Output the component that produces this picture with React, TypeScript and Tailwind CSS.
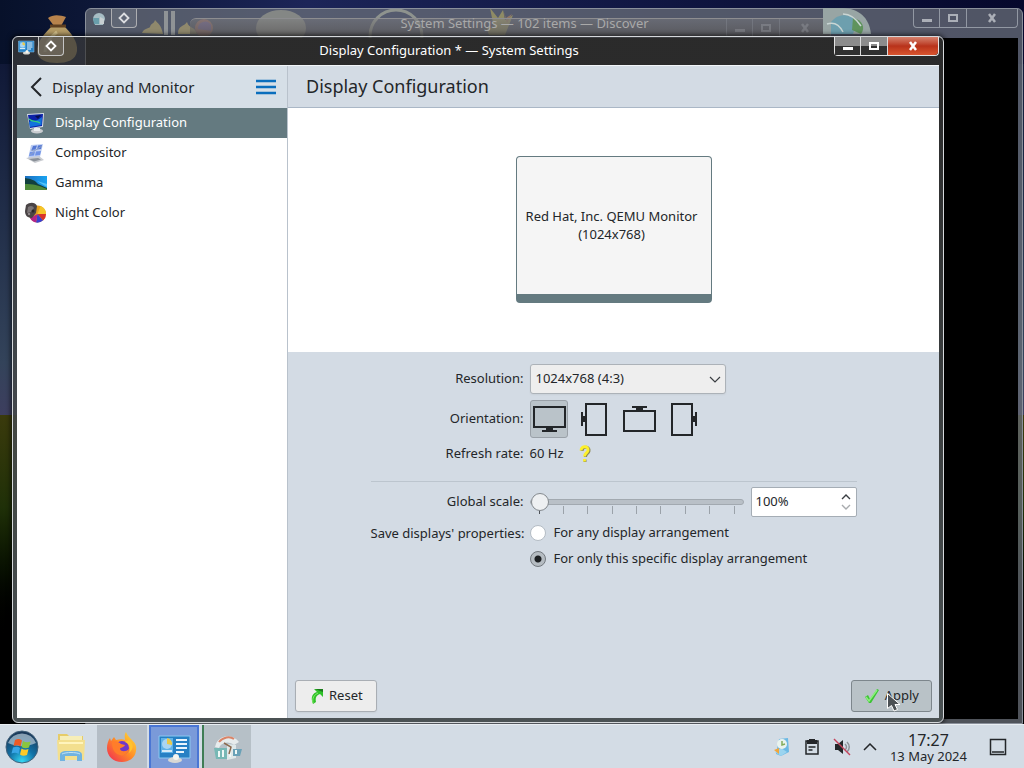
import { useState } from "react";
import type { ReactNode } from "react";

const modules = [
  { name: "Display Configuration", icon: <DisplayIcon /> },
  { name: "Compositor", icon: <CompositorIcon /> },
  { name: "Gamma", icon: <GammaIcon /> },
  { name: "Night Color", icon: <NightColorIcon /> },
];

const orientations = [
  { id: "normal", label: "No rotation", icon: <NormalMonitor /> },
  { id: "left", label: "90° clockwise", icon: <LeftMonitor /> },
  { id: "flipped", label: "Upside down", icon: <FlippedMonitor /> },
  { id: "right", label: "90° counterclockwise", icon: <RightMonitor /> },
];

function DisplayIcon() {
  return (
    <svg viewBox="0 0 22 22" className="size-[22px] shrink-0">
      <path d="M2 2l17-1-1 14-13 2z" fill="#d7dde6" />
      <path d="M3 3l15-1-1 12-12 2z" fill="#0b22a8" />
      <path d="M4 10c4-3 6 1 13-5l-.5 8L5 15z" fill="#1272dc" />
      <path d="M4 7c4 4 7 1 11 4" stroke="#35d07e" strokeWidth="1.300" fill="none" />
      <path d="M10 4l6-1-3 4z" fill="#061050" />
      <ellipse cx="12" cy="19" rx="6" ry="2.400" fill="#c9ccd0" />
      <path d="M9 16h6v3H9z" fill="#e9ebee" />
    </svg>
  );
}

function CompositorIcon() {
  return (
    <svg viewBox="0 0 22 22" className="size-[22px] shrink-0">
      <path d="M6 3l12-1-3 13-12 2z" fill="#bccdf2" />
      <path d="M8 4l4-.5-1.500 4-4 .5zM13 3.500l4-.5-1 4-4 .5z" fill="#5478d4" />
      <path d="M5 10l5-.5-1 4-5 .5zM11 9.500l5-.5-1 4-5 .5z" fill="#6f92e6" />
      <path d="M1 16l13-2 5 4-9 3z" fill="#c9ccd1" />
      <path d="M4 17l9-1 3 1.500-7 2z" fill="#8a9098" />
      <path d="M6 8l3 1 8-5M5 13l4-3" stroke="#8d9fc6" fill="none" />
    </svg>
  );
}

function GammaIcon() {
  return (
    <svg viewBox="0 0 22 22" className="size-[22px] shrink-0">
      <defs>
        <linearGradient id="gammaSky" x1="0" x2="1">
          <stop offset="0" stopColor="#1c6fc0" />
          <stop offset="1" stopColor="#19a4f2" />
        </linearGradient>
      </defs>
      <path d="M0 4h22v14H0z" fill="url(#gammaSky)" />
      <path d="M0 6c6 1 10 2 13 6l9 4v2H0z" fill="#12403e" />
      <path d="M0 12c8 0 13 1 22 5v1H0z" fill="#4f8a3a" />
      <path d="M12 9l10 3v3z" fill="#55c4f7" />
    </svg>
  );
}

function NightColorIcon() {
  return (
    <svg viewBox="0 0 22 22" className="size-[22px] shrink-0">
      <circle cx="12.500" cy="12" r="8.500" fill="#e9a11c" />
      <path d="M12.500 12l3-8a8.500 8.500 0 0 1 5.500 8z" fill="#f5c52a" />
      <path d="M12.500 12H21a8.500 8.500 0 0 1-3 6.500z" fill="#d9342b" />
      <path d="M12.500 12l5.500 6.500a8.500 8.500 0 0 1-7 2z" fill="#3a3fd0" />
      <path d="M12.500 12L11 20.500A8.500 8.500 0 0 1 5 16z" fill="#b32488" />
      <path d="M1 3c4-3 9-3 11 1l-1 7-4 5c-4 0-7-2-7-7z" fill="#4a4446" />
      <path d="M3 5c3-2 5-1 6 1l-3 4-4 1z" fill="#7b7577" />
      <circle cx="8" cy="9" r="1.500" fill="#2a2628" />
      <circle cx="4" cy="12" r="1.200" fill="#918a8c" />
    </svg>
  );
}

function NormalMonitor() {
  return (
    <svg viewBox="0 0 36 36" className="size-9" fill="none" stroke="#232629" strokeWidth="2">
      <path d="M3 6h31v20H3zM11 30h15" />
      <path d="M15 28.500h7" strokeWidth="4" />
    </svg>
  );
}

function LeftMonitor() {
  return (
    <svg viewBox="0 0 36 36" className="size-9" fill="none" stroke="#232629" strokeWidth="2">
      <path d="M10 3h20v31H10zM6 11v14" />
      <path d="M8 15v6" strokeWidth="4" />
    </svg>
  );
}

function FlippedMonitor() {
  return (
    <svg viewBox="0 0 36 36" className="size-9" fill="none" stroke="#232629" strokeWidth="2">
      <path d="M3 10h31v20H3zM11 6h15" />
      <path d="M15 7.500h7" strokeWidth="4" />
    </svg>
  );
}

function RightMonitor() {
  return (
    <svg viewBox="0 0 36 36" className="size-9" fill="none" stroke="#232629" strokeWidth="2">
      <path d="M6 3h20v31H6zM30 11v14" />
      <path d="M28 15v6" strokeWidth="4" />
    </svg>
  );
}

function WallpaperIcons() {
  return (
    <svg className="absolute left-0 top-0 h-16 w-[1024px]" viewBox="0 0 1024 64" aria-hidden="true">
      {/* money bag */}
      <path d="M48 18c5-4 12-3 18-1l-5 9h-7z" fill="#b8834c" />
      <path d="M53 25h10c8 8 15 16 14 26-1 9-10 12-20 12s-19-3-20-11c-1-10 8-19 16-27z" fill="#b59c66" />
      <path d="M50 26h16" stroke="#5e3f20" strokeWidth="3" />
      <path d="M57 32c-8 6-12 12-12 20" stroke="#d9c68f" strokeWidth="3" fill="none" />
      {/* laurel and columns */}
      <path d="M142 33c2-5 6-4 8-6 1-4 4-3 5-7 3 4 6 4 8 14zM178 34c0-9 6-7 9-12 2 7 8 4 10 12z" fill="#ffd34a" />
      <path d="M164 11h4v24h-4zM171 11h4v24h-4z" fill="#ffffee" />
      <circle cx="204" cy="28" r="9" fill="#ff6238" />
      <path d="M198 29a7 7 0 0 1 13-4v6z" fill="#9040d8" />
      <ellipse cx="281" cy="28" rx="25" ry="18" fill="#d2ceaa" />
      <circle cx="396" cy="36" r="26" fill="none" stroke="#fcffd0" strokeWidth="3" />
      <path d="M490 8l8 10 5-8 2 10 8-5-8 20h-16l-3-8 8 1z" fill="#ffe02e" />
      <path d="M503 10l3 8 6-4-5 9z" fill="#ff8b30" />
    </svg>
  );
}

function GlobeIcon() {
  return (
    <svg viewBox="0 0 48 26" className="absolute right-[153px] top-2 h-[26px] w-12" aria-hidden="true">
      <path d="M0 0h20c16 1 26 9 28 26H0z" fill="#98a5a4" />
      <path d="M8 14c8-10 20-8 26 0l-4 12H8z" fill="#6d9fae" />
      <path d="M30 10c9 2 13 9 8 16l-9-4z" fill="#5f935c" />
      <path d="M4 16c6-2 12 0 16 8M20 6c8 0 14 6 18 12" stroke="#c9d6d4" strokeWidth="1.500" fill="none" />
    </svg>
  );
}

function WindowControls({ active }: { active?: boolean }) {
  return (
    <div
      className={
        active
          ? "flex h-[19px] rounded-b border border-t-0 border-[#e4e4e4]"
          : "flex h-[19px] rounded-b border border-t-0 border-[#a3a9b3] opacity-80"
      }
    >
      <button
        aria-label="Minimize"
        className={
          active
            ? "flex w-[26px] items-center justify-center border-r border-[#dcdcdc] bg-linear-to-b from-[#8c8c8c] from-50% to-[#303030] to-50%"
            : "flex w-[26px] items-center justify-center border-r border-[#a3a9b3]"
        }
      >
        <svg viewBox="0 0 12 12" className="size-3">
          <path d="M1 7h10v3H1z" fill={active ? "#fff" : "#c2c6cc"} />
        </svg>
      </button>
      <button
        aria-label="Maximize"
        className={
          active
            ? "flex w-[27px] items-center justify-center border-r border-[#dcdcdc] bg-linear-to-b from-[#8c8c8c] from-50% to-[#303030] to-50%"
            : "flex w-[27px] items-center justify-center border-r border-[#a3a9b3]"
        }
      >
        <svg viewBox="0 0 12 12" className="size-3">
          <path d="M2 3h8v6H2z" fill="none" stroke={active ? "#fff" : "#c2c6cc"} strokeWidth="2" />
        </svg>
      </button>
      <button
        aria-label="Close"
        className={
          active
            ? "flex w-[50px] items-center justify-center rounded-br bg-linear-to-b from-[#d5806c] via-[#b8321a] via-50% to-[#d9552f]"
            : "flex w-[50px] items-center justify-center"
        }
      >
        <svg viewBox="0 0 12 12" className="size-3">
          <path d="M3 2l6 8M9 2l-6 8" stroke={active ? "#fff" : "#c2c6cc"} strokeWidth="2.500" />
        </svg>
      </button>
    </div>
  );
}

function DiamondButton() {
  return (
    <button
      aria-label="On all desktops"
      className="flex h-[19px] w-[26px] items-center justify-center rounded-b border border-t-0 border-[#c4c4c4] bg-white/10"
    >
      <svg viewBox="0 0 12 12" className="size-3">
        <path d="M6 1.500L10.500 6 6 10.500 1.500 6z" fill="none" stroke="#fff" strokeWidth="1.800" />
      </svg>
    </button>
  );
}

function BackgroundWindows() {
  return (
    <>
      <div className="absolute bottom-0 left-[85px] right-px top-2 flex flex-col rounded-t-md border border-[#8a909b] bg-[#6a6f78]/75 pb-1 pr-1">
        <div className="flex h-[29px] shrink-0 items-start justify-between pl-1">
          <div className="flex gap-[3px] opacity-80">
            <svg viewBox="0 0 18 18" className="mt-px size-[18px]">
              <path d="M3 9a6 6 0 0 1 12 0l-2 6H5z" fill="#bcd7dc" />
              <path d="M3 8h6v6H4z" fill="#6fb0bd" />
              <path d="M10 7l4 2v5h-4z" fill="#e6eeee" />
            </svg>
            <DiamondButton />
          </div>
          <WindowControls />
        </div>
        <div className="flex-1 bg-black" />
      </div>
      <div className="absolute left-[190px] right-[193px] top-[18px] flex h-[18px] items-start justify-end rounded-t-md border-t border-[#8d8d90] bg-linear-to-b from-[#7c7c7e]/50 to-[#5c5a59]/70">
        <div className="opacity-30">
          <WindowControls />
        </div>
      </div>
      <GlobeIcon />
      <p className="absolute left-[85px] right-[60px] top-[14px] text-center text-[13px] leading-[18px] text-[#a9a9a9]">
        System Settings — 102 items — Discover
      </p>
    </>
  );
}

function SettingsIcon({ className }: { className: string }) {
  return (
    <svg viewBox="0 0 36 36" className={className}>
      <path d="M3 6h31v22H3z" fill="#2780c4" stroke="#8cc7ef" />
      <path d="M5 8h12v15H5z" fill="#5fb2e8" />
      <circle cx="11" cy="14" r="5" fill="#a9d5f3" />
      <path d="M11 14V8a6 6 0 0 1 5 7z" fill="#e8c94c" />
      <path d="M20 10h11M20 14h11M20 18h11M20 22h8" stroke="#e9f5fd" strokeWidth="2" />
      <path d="M6 21h10" stroke="#d5eaf8" strokeWidth="2" />
      <ellipse cx="19" cy="30" rx="7" ry="3" fill="#d8d8d4" />
      <circle cx="20" cy="27" r="3" fill="#f5f5f0" />
    </svg>
  );
}

function Sidebar() {
  const [selected, setSelected] = useState("Display Configuration");

  return (
    <aside className="flex w-[271px] shrink-0 flex-col border-r border-[#b9c2cc] bg-white">
      <div className="flex h-[42px] items-center bg-[#d6dfe7] pl-3 pr-[10px]">
        <button aria-label="Back" className="flex w-[23px]">
          <svg viewBox="0 0 16 22" className="h-[22px] w-4">
            <path d="M12 2L3 11l9 9" fill="none" stroke="#232629" strokeWidth="2" />
          </svg>
        </button>
        <h2 className="flex-1 text-[15px] leading-5">Display and Monitor</h2>
        <button aria-label="Menu">
          <svg viewBox="0 0 22 16" className="h-4 w-[22px]">
            <path d="M1 2h20M1 8h20M1 14h20" stroke="#0a6ebd" strokeWidth="2.500" />
          </svg>
        </button>
      </div>
      <nav className="flex flex-col">
        {modules.map((m) => (
          <button
            key={m.name}
            onClick={() => setSelected(m.name)}
            className={
              m.name === selected
                ? "flex h-[30px] items-center gap-2 bg-[#647a80] px-2 text-left text-white"
                : "flex h-[30px] items-center gap-2 px-2 text-left"
            }
          >
            {m.icon}
            {m.name}
          </button>
        ))}
      </nav>
    </aside>
  );
}

function Row({ label, htmlFor, children }: { label: string; htmlFor?: string; children: ReactNode }) {
  return (
    <>
      <label htmlFor={htmlFor} className="text-right">
        {label}
      </label>
      <div className="flex items-center">{children}</div>
    </>
  );
}

function DisplayForm() {
  const [orientation, setOrientation] = useState("normal");
  const [scale, setScale] = useState(100);
  const [save, setSave] = useState("specific");

  const radioClass =
    "size-4 shrink-0 appearance-none rounded-full border border-[#b4bcc4] bg-white checked:border-[#73797f] checked:bg-[#b5bcc2] checked:bg-[radial-gradient(circle,#1c1f22_3px,transparent_4px)]";

  return (
    <div className="mx-auto w-[486px] pt-3">
      <div className="grid grid-cols-[153px_1fr] items-center gap-x-[6px] gap-y-[6px]">
        <Row label="Resolution:" htmlFor="resolution">
          <div className="relative">
            <select
              id="resolution"
              className="h-[30px] w-[196px] appearance-none rounded-[3px] border border-[#acb2b8] bg-[#eeeeee] px-[5px] shadow-xs"
            >
              <option>1024x768 (4:3)</option>
            </select>
            <svg viewBox="0 0 12 8" className="pointer-events-none absolute right-[5px] top-3 h-2 w-3">
              <path d="M1 1l5 5 5-5" fill="none" stroke="#3a3e42" strokeWidth="1.200" />
            </svg>
          </div>
        </Row>
        <Row label="Orientation:">
          <div className="flex gap-[7px]">
            {orientations.map((o) => (
              <button
                key={o.id}
                aria-label={o.label}
                onClick={() => setOrientation(o.id)}
                className={
                  o.id === orientation
                    ? "size-[38px] rounded-[3px] border border-[#9aa1a8] bg-[#bac3c9]"
                    : "size-[38px] border border-transparent"
                }
              >
                {o.icon}
              </button>
            ))}
          </div>
        </Row>
        <Row label="Refresh rate:">
          <span>60 Hz</span>
          <button aria-label="Refresh rate help" className="ml-3">
            <svg viewBox="0 0 18 18" className="size-[18px]">
              <path d="M6 6c0-5 8-5 7 0-.4 2.500-3.500 2.500-3.500 6M9 14.500v2.500" fill="none" stroke="#8d8a58" strokeWidth="3" />
              <path d="M5 5.500c0-5 8-5 7 0-.4 2.500-3.500 2.500-3.500 6M8.500 14v2.500" fill="none" stroke="#fdf02a" strokeWidth="2.800" />
            </svg>
          </button>
        </Row>
      </div>
      <hr className="mb-[5px] mt-[17px] border-[#bcc5ce]" />
      <div className="grid grid-cols-[153px_1fr] items-center gap-x-[6px]">
        <Row label="Global scale:" htmlFor="scale">
          <div className="relative flex-1">
            <input
              id="scale"
              type="range"
              min={100}
              max={300}
              step={25}
              value={scale}
              onChange={(e) => setScale(Number(e.target.value))}
              className="relative z-10 block h-[26px] w-full appearance-none bg-transparent [&::-webkit-slider-runnable-track]:h-[6px] [&::-webkit-slider-runnable-track]:rounded-full [&::-webkit-slider-runnable-track]:border [&::-webkit-slider-runnable-track]:border-[#a2a9b0] [&::-webkit-slider-runnable-track]:bg-[#b9c0c7] [&::-webkit-slider-thumb]:-mt-[7px] [&::-webkit-slider-thumb]:size-[18px] [&::-webkit-slider-thumb]:appearance-none [&::-webkit-slider-thumb]:rounded-full [&::-webkit-slider-thumb]:border [&::-webkit-slider-thumb]:border-[#84898e] [&::-webkit-slider-thumb]:bg-[#eef0f2]"
            />
            <div className="pointer-events-none absolute inset-x-[9px] bottom-px flex justify-between">
              {Array.from({ length: 9 }, (_, i) => (
                <span key={i} className={i === 0 ? "h-2 w-px bg-[#4d5257]" : "h-2 w-px bg-[#9ba2a9]"} />
              ))}
            </div>
          </div>
          <div className="ml-[7px] flex h-[30px] w-[106px] rounded-[2px] border border-[#a5adb5] bg-white">
            <input
              aria-label="Scale percentage"
              value={`${scale}%`}
              readOnly
              className="min-w-0 flex-1 bg-transparent px-1 outline-none"
            />
            <div className="flex w-5 flex-col items-center justify-center gap-1">
              <button aria-label="Increase" className="flex" onClick={() => setScale(Math.min(300, scale + 25))}>
                <svg viewBox="0 0 10 7" className="h-[7px] w-[10px]">
                  <path d="M1 6l4-4 4 4" fill="none" stroke="#3a3e42" strokeWidth="1.400" />
                </svg>
              </button>
              <button aria-label="Decrease" className="flex" onClick={() => setScale(Math.max(100, scale - 25))}>
                <svg viewBox="0 0 10 7" className="h-[7px] w-[10px]">
                  <path d="M1 1l4 4 4-4" fill="none" stroke="#a8abae" strokeWidth="1.400" />
                </svg>
              </button>
            </div>
          </div>
        </Row>
      </div>
      <div role="radiogroup" aria-labelledby="save-label" className="mt-[6px] grid grid-cols-[153px_1fr] gap-x-[6px]">
        <span id="save-label" className="whitespace-nowrap text-right leading-5">
          Save displays' properties:
        </span>
        <div className="flex flex-col gap-[6px]">
          <label className="flex h-5 items-center gap-2">
            <input type="radio" name="save" checked={save === "any"} onChange={() => setSave("any")} className={radioClass} />
            For any display arrangement
          </label>
          <label className="flex h-5 items-center gap-2">
            <input type="radio" name="save" checked={save === "specific"} onChange={() => setSave("specific")} className={radioClass} />
            For only this specific display arrangement
          </label>
        </div>
      </div>
    </div>
  );
}

function Footer() {
  return (
    <footer className="flex justify-between px-[7px] pb-[6px]">
      <button className="flex h-8 items-center gap-1 rounded-[3px] border border-[#a9aeb4] bg-[#ededed] px-[13px] shadow-xs">
        <svg viewBox="0 0 16 18" className="h-[18px] w-4">
          <path d="M4 17C1 10 4 6 8 5L5 2h9v8l-3-3C8 8 6 10 7 15z" fill="#2fc128" />
          <path d="M4 16C3 11 5 8 9 6" stroke="#86ee6c" fill="none" />
          <path d="M6 2h8v3z" fill="#1b7a1a" />
        </svg>
        Reset
      </button>
      <button className="relative flex h-8 items-center gap-[5px] rounded-[3px] border border-[#7d868c] bg-[#b9c2c7] px-3">
        <svg viewBox="0 0 16 16" className="size-4">
          <path d="M1 9l3-2 2 4 7-10 2 1L7 15H5z" fill="#3cc434" />
          <path d="M2 9l3 4L13 2" stroke="#8cf07c" fill="none" strokeWidth="1.500" />
        </svg>
        Apply
        <svg viewBox="0 0 16 20" className="absolute left-[34px] top-[11px] h-5 w-4">
          <path d="M1.500 1.500v15l4-3 2.500 5.500 3.500-1.500L9 12.500h5z" fill="#4c5155" stroke="#fff" strokeWidth="1" />
        </svg>
      </button>
    </footer>
  );
}

function SettingsWindow() {
  return (
    <div className="absolute bottom-px left-3 right-20 top-9 flex flex-col rounded-md border border-[#d5d8db] bg-linear-to-b from-[#393939]/75 from-5% to-[#4b5254] shadow-[0_0_5px_1px_rgba(0,0,0,0.7)]">
      <header className="flex h-7 shrink-0 items-start pl-1 pr-1 text-white">
        <SettingsIcon className="mt-px size-[18px]" />
        <div className="ml-[3px]">
          <DiamondButton />
        </div>
        <h1 className="flex-1 text-center leading-[27px]">Display Configuration * — System Settings</h1>
        <WindowControls active />
      </header>
      <div className="mx-1 mb-1 flex min-h-0 flex-1 border-t border-[#f2f5f8] bg-[#d3dbe4]">
        <Sidebar />
        <main className="flex min-w-0 flex-1 flex-col">
          <h2 className="flex h-[42px] shrink-0 items-center border-b border-[#aab7c6] px-[18px] text-[18px]">
            Display Configuration
          </h2>
          <section className="flex h-[244px] shrink-0 items-center justify-center bg-white pb-[2px]">
            <div className="flex h-[147px] w-[196px] items-center justify-center rounded-[4px] border border-b-[9px] border-[#647a80] bg-[#f5f5f5] pr-1 text-center leading-[18px]">
              Red Hat, Inc. QEMU Monitor
              <br />
              (1024x768)
            </div>
          </section>
          <div className="flex-1">
            <DisplayForm />
          </div>
          <Footer />
        </main>
      </div>
    </div>
  );
}

function Taskbar() {
  return (
    <footer className="flex h-11 shrink-0 items-stretch border-t border-[#e9eef2] bg-[#d3dce5]">
      <button aria-label="Start" className="flex w-11 items-center justify-center">
        <svg viewBox="0 0 34 34" className="size-[34px]">
          <defs>
            <radialGradient id="orb" cx="0.5" cy="0.95" r="0.9">
              <stop offset="0" stopColor="#35d8f4" />
              <stop offset="0.45" stopColor="#1173a8" />
              <stop offset="1" stopColor="#1b3858" />
            </radialGradient>
          </defs>
          <circle cx="17" cy="17" r="16" fill="url(#orb)" stroke="#42617a" />
          <path d="M3 13a15 15 0 0 1 28 0c-8 4-20 4-28 0z" fill="#c3d2dd" opacity="0.65" />
          <path d="M10 10c3-1.500 5-1 7 .5l-1.500 6c-2-1.500-4-1.500-7-.5z" fill="#ee5a25" />
          <path d="M18 11c2.500 1.500 5 1.500 7.500.5L24 17.500c-2.500 1-5 1-7.500-.5z" fill="#8ac53e" />
          <path d="M8 17.500c3-1 5-1 7 .5L13.500 24c-2-1.500-4-1.500-7-.5z" fill="#38a5e6" />
          <path d="M16.500 18.500c2.500 1.500 4.500 1.500 7 .5L22 25c-2.500 1-5 1-7-.5z" fill="#fbc928" />
        </svg>
      </button>
      <button aria-label="Files" className="flex w-[53px] items-center justify-center">
        <svg viewBox="0 0 32 32" className="size-8">
          <path d="M3 3h9l2 2h14v22H3z" fill="#e6cc69" />
          <path d="M5 5h22v5H5z" fill="#f6eeb8" />
          <path d="M2 9h28l-1 20H3z" fill="#f3df8e" />
          <path d="M4 12h24" stroke="#fff4bc" strokeWidth="2" />
          <path d="M5 30v-6c0-3 3-4 6-4h10c3 0 6 1 6 4v6h-5v-5H10v5z" fill="#71b3e0" />
          <path d="M7 23c4-2 14-2 18 0" stroke="#c2e2f5" fill="none" />
        </svg>
      </button>
      <button aria-label="Firefox" className="flex w-[50px] items-center justify-center bg-[#b4bdc6]">
        <svg viewBox="0 0 32 32" className="size-8">
          <defs>
            <linearGradient id="fox" x1="1" y1="0" x2="0" y2="1">
              <stop offset="0" stopColor="#ffe43a" />
              <stop offset="0.5" stopColor="#ff8a26" />
              <stop offset="1" stopColor="#ef2458" />
            </linearGradient>
          </defs>
          <path d="M20 1c1 3 3 5 6 8 3 3 5 6 4 11-1 7-7 11-14 11C7 31 1 25 1 17c0-4 1-7 3-10l1 3 3-4 2 3c4-1 7-1 9 0 0-3-1-5 1-8z" fill="url(#fox)" />
          <circle cx="16" cy="17" r="7" fill="#7038c8" />
          <path d="M6 11c4-2 7 0 9 2l4 1c-1 3-5 2-5 4 1 3 6 3 9 0-1 6-7 8-12 5-4-3-5-7-5-12z" fill="#ff7d2a" />
          <path d="M19 11c5 2 6 6 4 11 6-5 4-10 0-13z" fill="#ffc22e" />
        </svg>
      </button>
      <button aria-label="System Settings" className="ml-[2px] flex w-[50px] items-center justify-center border-x-2 border-t-2 border-[#4a76d4] bg-[#7a9ad9]">
        <SettingsIcon className="size-9" />
      </button>
      <button aria-label="Discover" className="ml-[3px] flex w-[49px] items-center justify-center border-l-2 border-[#3f7d55] bg-[#b6c0c7]">
        <svg viewBox="0 0 32 32" className="size-8">
          <path d="M3 16A13 12 0 0 1 27 11l-5 3A9 8 0 0 0 7 17z" fill="#e7eced" />
          <path d="M7 11c4-5 11-6 15-3" stroke="#d98468" strokeWidth="2" fill="none" />
          <path d="M2 17h13v11H4z" fill="#77b8b5" />
          <path d="M15 13l9 1v13l-9 2z" fill="#dfe8e9" />
          <path d="M21 18h9l-2 7h-7z" fill="#69a1b7" />
          <path d="M7 20v6M11 19v7M18 17v9M24 19v4" stroke="#eef8f6" strokeWidth="2" />
          <path d="M12 12l7 4-2 7" stroke="#8b6a50" fill="none" strokeWidth="1.500" />
        </svg>
      </button>
      <div className="ml-auto flex items-center pr-[17px] text-[#232629]">
        <button aria-label="Updates" className="flex w-[30px] justify-center">
          <svg viewBox="0 0 18 20" className="h-5 w-[18px]">
            <path d="M6 2l9-1 1 14-8 4-5-2z" fill="#6bb9e4" />
            <path d="M2 15l6-4 6 4-6 4z" fill="#9bd4ef" />
            <path d="M1 13l5-2v6z" fill="#f0a63c" />
            <circle cx="9" cy="7" r="5" fill="#e9f3ee" />
            <path d="M9 4v4l3-1" stroke="#84ac5a" fill="none" strokeWidth="1.500" />
          </svg>
        </button>
        <button aria-label="Clipboard" className="flex w-[30px] justify-center">
          <svg viewBox="0 0 16 18" className="h-[18px] w-4">
            <path d="M2 3h12v13H2z" fill="none" stroke="#232629" strokeWidth="1.500" />
            <path d="M3 2h2V1h6v1h2v4H3z" fill="#232629" />
            <path d="M4.500 9h7M4.500 12h4" stroke="#232629" strokeWidth="1.500" />
          </svg>
        </button>
        <button aria-label="Volume muted" className="flex w-[30px] justify-center">
          <svg viewBox="0 0 18 18" className="size-[18px]">
            <path d="M2 6h3l5-4v14l-5-4H2z" fill="#232629" />
            <path d="M12 6c2 2 2 4 0 6M14 4c3 3 3 7 0 10" stroke="#8c9298" fill="none" strokeWidth="1.500" />
            <path d="M1 1l16 16" stroke="#c5445c" strokeWidth="1.500" />
          </svg>
        </button>
        <button aria-label="Show hidden icons" className="flex w-[26px] justify-center">
          <svg viewBox="0 0 14 8" className="h-2 w-[14px]">
            <path d="M1 7l6-6 6 6" fill="none" stroke="#232629" strokeWidth="1.500" />
          </svg>
        </button>
        <time dateTime="2024-05-13T17:27" className="ml-[7px] block text-center">
          <span className="block text-[16px] leading-[18px]">17:27</span>
          <span className="block text-[13px] leading-[14px]">13 May 2024</span>
        </time>
        <button aria-label="Show desktop" className="ml-[22px]">
          <svg viewBox="0 0 18 18" className="size-[18px]">
            <path d="M1.500 1.500h15v15h-15zM3 14h12" fill="none" stroke="#232629" strokeWidth="1.500" />
          </svg>
        </button>
      </div>
    </footer>
  );
}

export default function App() {
  return (
    <div className="flex h-screen flex-col overflow-hidden bg-black font-['Noto_Sans',sans-serif] text-[13px] text-[#232629]">
      <div className="relative flex-1 overflow-hidden bg-linear-to-b from-[#0a1030] from-0% via-[#33435a] via-50% to-[#403c60] to-60%">
        <div className="absolute inset-x-0 bottom-0 top-[415px] bg-linear-to-b from-[#3a3a0c] via-[#1f3008] via-30% to-black to-75%" />
        <div className="absolute inset-x-0 top-0 h-16 bg-linear-to-r from-[#07112a] via-[#1c2558] via-30% to-[#06082c]" />
        <WallpaperIcons />
        <BackgroundWindows />
        <SettingsWindow />
      </div>
      <Taskbar />
    </div>
  );
}
